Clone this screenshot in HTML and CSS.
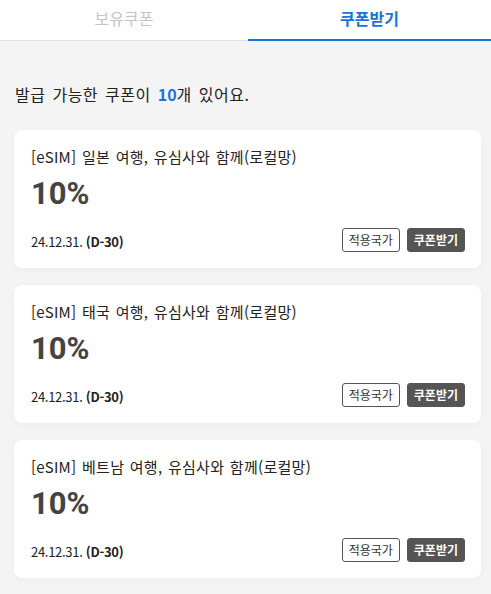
FILE: index.html
```html
<!DOCTYPE html>
<html lang="ko">
<head>
<meta charset="utf-8">
<link rel="stylesheet" href="styles.css">
</head>
<body>
<div class="tabs">
  <div class="tab">보유쿠폰</div>
  <div class="tab active">쿠폰받기</div>
</div>
<main class="content">
  <p class="summary">발급 가능한 쿠폰이 <b class="count">10</b>개 있어요.</p>
  <div class="list">
    <div class="card">
      <div class="title">[eSIM] 일본 여행, 유심사와 함께(로컬망)</div>
      <div class="rate">10%</div>
      <div class="foot">
        <span class="date">24.12.31. <b>(D-30)</b></span>
        <div class="btns"><span class="btn outline">적용국가</span><span class="btn solid">쿠폰받기</span></div>
      </div>
    </div>
    <div class="card">
      <div class="title">[eSIM] 태국 여행, 유심사와 함께(로컬망)</div>
      <div class="rate">10%</div>
      <div class="foot">
        <span class="date">24.12.31. <b>(D-30)</b></span>
        <div class="btns"><span class="btn outline">적용국가</span><span class="btn solid">쿠폰받기</span></div>
      </div>
    </div>
    <div class="card">
      <div class="title">[eSIM] 베트남 여행, 유심사와 함께(로컬망)</div>
      <div class="rate">10%</div>
      <div class="foot">
        <span class="date">24.12.31. <b>(D-30)</b></span>
        <div class="btns"><span class="btn outline">적용국가</span><span class="btn solid">쿠폰받기</span></div>
      </div>
    </div>
  </div>
</main>
</body>
</html>
```
FILE: styles.css
```css
* { box-sizing: border-box; }
html, body { margin: 0; padding: 0; }
body {
  background: #f4f4f4;
  font-family: "Noto Sans CJK KR", "Noto Sans", sans-serif;
  color: #222;
  width: 491px;
  height: 594px;
  overflow: hidden;
}
.tabs {
  display: flex;
  height: 41px;
  background: #fff;
  border-bottom: 1px solid #e2e2e2;
}
.tab {
  width: 248px;
  text-align: center;
  font-size: 16px;
  line-height: 37px;
  color: #c4c4c4;
}
.tab.active {
  flex: 1;
  color: #1a73d8;
  font-weight: 700;
  border-bottom: 2px solid #1a73d8;
  margin-bottom: -1px;
}
.content { padding: 0 10px 0 14px; }
.summary {
  margin: 38px 0 0 1px;
  font-size: 16px;
  line-height: 30px;
  color: #222;
  letter-spacing: 0.5px;
  word-spacing: 2px;
}
.count { color: #1a73d8; letter-spacing: 0; }
.list {
  margin-top: 21px;
  display: flex;
  flex-direction: column;
  gap: 17px;
}
.card {
  background: #fff;
  border-radius: 8px;
  box-shadow: 0 2px 8px rgba(0,0,0,0.035);
  height: 138px;
  padding: 16px 16px 16px 17px;
  display: flex;
  flex-direction: column;
}
.title {
  font-size: 15px;
  line-height: 22px;
  color: #222;
  letter-spacing: 0.3px;
  word-spacing: 1px;
}
.rate {
  font-family: Roboto, "Noto Sans", sans-serif;
  font-size: 31px;
  font-weight: 700;
  color: #444;
  line-height: 36px;
  margin-top: 8px;
}
.foot {
  margin-top: auto;
  display: flex;
  justify-content: space-between;
  align-items: flex-end;
}
.date {
  font-size: 13px;
  line-height: 20px;
  color: #222;
  letter-spacing: -0.3px;
}
.date b { font-weight: 700; }
.btns { display: flex; gap: 7px; }
.btn {
  height: 24px;
  padding: 0 6px;
  font-size: 12px;
  line-height: 22px;
  border-radius: 3px;
  border: 1px solid #555;
}
.btn.outline { background: #fff; color: #333; }
.btn.solid { background: #555; color: #fff; font-weight: 700; }
```
